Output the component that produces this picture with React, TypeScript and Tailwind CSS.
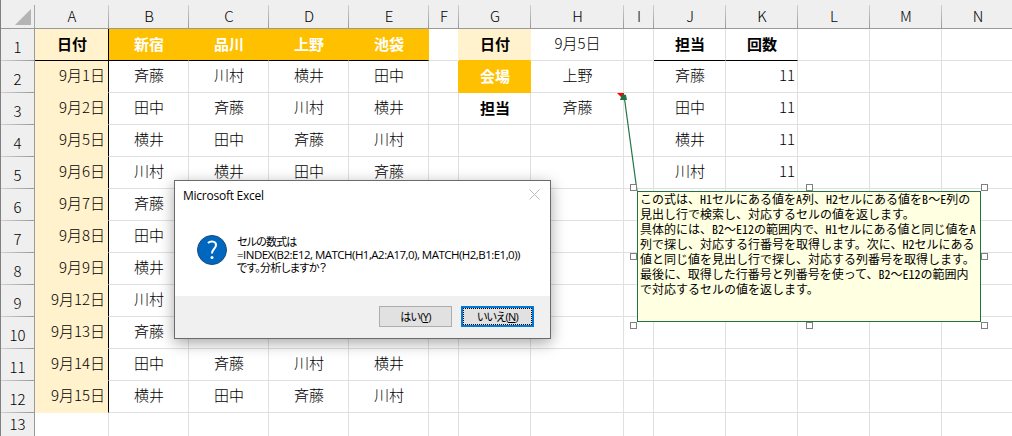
import clsx from "clsx";

// Column letters with their widths
const columns = [
  { name: "A", width: "w-[74px]" },
  { name: "B", width: "w-[80px]" },
  { name: "C", width: "w-[80px]" },
  { name: "D", width: "w-[80px]" },
  { name: "E", width: "w-[80px]" },
  { name: "F", width: "w-[30px]" },
  { name: "G", width: "w-[72px]" },
  { name: "H", width: "w-[93px]" },
  { name: "I", width: "w-[30px]" },
  { name: "J", width: "w-[72px]" },
  { name: "K", width: "w-[72px]" },
  { name: "L", width: "w-[72px]" },
  { name: "M", width: "w-[72px]" },
  { name: "N", width: "w-[72px]" },
];

// Cell values, one array per row, starting at column A
const rows: string[][] = [
  ["日付", "新宿", "品川", "上野", "池袋", "", "日付", "9月5日", "", "担当", "回数"],
  ["9月1日", "斉藤", "川村", "横井", "田中", "", "会場", "上野", "", "斉藤", "11"],
  ["9月2日", "田中", "斉藤", "川村", "横井", "", "担当", "斉藤", "", "田中", "11"],
  ["9月5日", "横井", "田中", "斉藤", "川村", "", "", "", "", "横井", "11"],
  ["9月6日", "川村", "横井", "田中", "斉藤", "", "", "", "", "川村", "11"],
  // The dialog hides columns C to E of these rows
  ["9月7日", "斉藤"],
  ["9月8日", "田中"],
  ["9月9日", "横井"],
  ["9月12日", "川村"],
  ["9月13日", "斉藤"],
  ["9月14日", "田中", "斉藤", "川村", "横井"],
  ["9月15日", "横井", "田中", "斉藤", "川村"],
  [],
];

const commentLines = [
  "この式は、H1セルにある値をA列、H2セルにある値をB～E列の",
  "見出し行で検索し、対応するセルの値を返します。",
  "具体的には、B2～E12の範囲内で、H1セルにある値と同じ値をA",
  "列で探し、対応する行番号を取得します。次に、H2セルにある",
  "値と同じ値を見出し行で探し、対応する列番号を取得します。",
  "最後に、取得した行番号と列番号を使って、B2～E12の範囲内",
  "で対応するセルの値を返します。",
];

// Resize handles around the comment box
const handles = [
  "left-[-8px] top-[-8px]",
  "left-[168px] top-[-8px]",
  "left-[343px] top-[-8px]",
  "left-[-8px] top-[61px]",
  "left-[343px] top-[61px]",
  "left-[-8px] top-[130px]",
  "left-[168px] top-[130px]",
  "left-[343px] top-[130px]",
];

const cellStyle = (row: number, col: string) => {
  const isTable = row <= 12;
  if (row === 1) {
    if (col === "A") return "bg-[#fff2cc] border-r-black border-b-black font-bold";
    if ("BCDE".includes(col))
      return "bg-[#ffc000] border-r-[#ffc000] border-b-black text-white font-bold";
    if (col === "F") return "border-r-[#fff2cc] border-b-[#e0e0e0]";
    if (col === "G") return "bg-[#fff2cc] border-r-[#fff2cc] border-b-[#ffc000] font-bold";
    if (col === "J" || col === "K") return "border-r-[#e0e0e0] border-b-black font-bold";
  }
  if (row === 2 && col === "F") return "border-r-[#ffc000] border-b-[#e0e0e0]";
  if (row === 2 && col === "G")
    return "bg-[#ffc000] border-r-[#ffc000] border-b-[#ffc000] text-white font-bold";
  if (row === 3 && col === "G") return "border-r-[#e0e0e0] border-b-[#e0e0e0] font-bold";
  if (col === "A" && isTable)
    return "bg-[#fff2cc] border-r-black border-b-[#fff2cc] justify-end pr-[3px]";
  if (col === "K") return "border-r-[#e0e0e0] border-b-[#e0e0e0] justify-end pr-[2px]";
  return "border-r-[#e0e0e0] border-b-[#e0e0e0]";
};

const Sheet = () => (
  <div className="w-[1014px] border-l border-[#808080] text-[15px] leading-none">
    {/* Column headers */}
    <div className="flex h-[29px] border-b border-[#999] bg-[#efefef] pt-[5px]">
      <div className="flex w-[34px] shrink-0 border-r border-[#a6a6a6]">
        <svg width="16" height="16" className="ml-[14px] mt-1">
          <path d="M16 0V16H0Z" fill="#b4b4b4" />
        </svg>
      </div>
      {columns.map((column) => (
        <div key={column.name} className={clsx("flex shrink-0", column.width)}>
          <div className="flex grow items-center justify-center pb-[3px] pl-px font-light">
            {column.name}
          </div>
          <div className="w-px bg-linear-to-b from-[#d0d0d0] to-[#999]" />
        </div>
      ))}
    </div>
    {rows.map((row, index) => (
      <div key={index} className={clsx("flex", index === 12 ? "h-[24px]" : "h-8")}>
        {/* Row number */}
        <div className="flex w-[34px] shrink-0 flex-col border-r border-[#999] bg-[#efefef]">
          <div className="flex grow items-end justify-center pb-[6px] font-light">{index + 1}</div>
          {index < 12 && <div className="h-px bg-linear-to-r from-[#d0d0d0] to-[#999]" />}
        </div>
        {columns.map((column, i) => (
          <div
            key={column.name}
            className={clsx(
              "flex shrink-0 items-center justify-center whitespace-nowrap border-r border-b",
              column.width,
              cellStyle(index + 1, column.name),
              cellStyle(index + 1, column.name).includes("font-bold")
                ? "pb-[3px] pl-px"
                : "pb-[4px] pl-px font-light"
            )}
          >
            {row[i]}
          </div>
        ))}
      </div>
    ))}
  </div>
);

const Comment = () => (
  <>
    {/* Connector from H3 to the comment */}
    <svg className="absolute left-[610px] top-[90px]" width="30" height="102">
      <path d="M7 3H14V10Z" fill="#f00" />
      <path d="M14 5L27 101" stroke="#217346" strokeWidth="1.2" />
      <path d="M12 4L16 5L17 10H10Z" fill="#217346" />
    </svg>
    <div className="absolute left-[637px] top-[191px] h-[131px] w-[344px] border border-[#217346] bg-[#ffffe1] pl-[2px] text-[12px] leading-[15px]">
      <div className="-mt-px">
        {commentLines.map((line) => (
          <p key={line} className="h-[15px] whitespace-nowrap">
            {/* Latin runs are half as wide as the kana */}
            {line.split(/([A-Z0-9]+)/).map((part, i) =>
              i % 2 ? (
                <span key={i} className="[font-feature-settings:'hwid']">
                  {part}
                </span>
              ) : (
                part
              )
            )}
          </p>
        ))}
      </div>
      {handles.map((position) => (
        <span
          key={position}
          className={clsx("absolute size-[7px] border border-[#808080] bg-white", position)}
        />
      ))}
    </div>
  </>
);

const Dialog = () => (
  <div className="absolute left-[174px] top-[180px] flex h-[159px] w-[377px] flex-col border border-[#6b6b6b] bg-white font-['Open_Sans','Noto_Sans_CJK_JP',sans-serif] text-[12px] shadow-[0_4px_14px_rgba(0,0,0,0.35)]">
    <div className="flex h-[30px] items-center justify-between pl-2 pr-[10px]">
      <span className="tracking-[-0.25px]">Microsoft Excel</span>
      <svg width="11" height="11" stroke="#bdbdbd" className="mb-[3px]">
        <path d="M0.5 0.5L10.5 10.5M10.5 0.5L0.5 10.5" />
      </svg>
    </div>
    <div className="flex grow pl-[22px] pt-6">
      <svg width="30" height="30" viewBox="0 0 30 30">
        <circle cx="15" cy="15" r="14.5" fill="#0067c0" stroke="#1b4b7a" />
        <path
          d="M11 8C13.6 5.6 19.2 6 19 10.2C18.8 13.6 15 14.2 15 18.6"
          fill="none"
          stroke="#fff"
          strokeWidth="2"
        />
        <circle cx="15" cy="22.5" r="1.5" fill="#fff" />
      </svg>
      <div className="ml-[10px] whitespace-nowrap leading-[13px]">
        <p className="text-[11px] tracking-[-0.8px] [font-feature-settings:'palt']">セルの数式は</p>
        <p className="text-[11.5px] tracking-[-0.52px]">
          =INDEX(B2:E12, MATCH(H1,A2:A17,0), MATCH(H2,B1:E1,0))
        </p>
        <p className="text-[11px] tracking-[-0.5px] [font-feature-settings:'palt']">
          です。分析しますか？
        </p>
      </div>
    </div>
    <div className="flex h-[42px] justify-end gap-[9px] bg-[#f0f0f0] pr-4 pt-[10px] text-[11px] leading-none tracking-[-0.7px] [font-feature-settings:'palt']">
      <button className="flex h-[21px] w-[73px] items-center justify-center border border-[#adadad] bg-[#e1e1e1]">
        はい(<u>Y</u>)
      </button>
      <button className="h-[21px] w-[73px] border-2 border-[#0078d7] bg-[#e1e1e1]">
        <span className="flex h-full items-center justify-center border border-dotted border-black">
          いいえ(<u>N</u>)
        </span>
      </button>
    </div>
  </div>
);

const App = () => {
  return (
    <div className="relative h-[436px] w-[1012px] overflow-hidden bg-white font-['Noto_Sans_CJK_JP',sans-serif] text-black">
      <Sheet />
      <Comment />
      <Dialog />
    </div>
  );
};

export default App;
